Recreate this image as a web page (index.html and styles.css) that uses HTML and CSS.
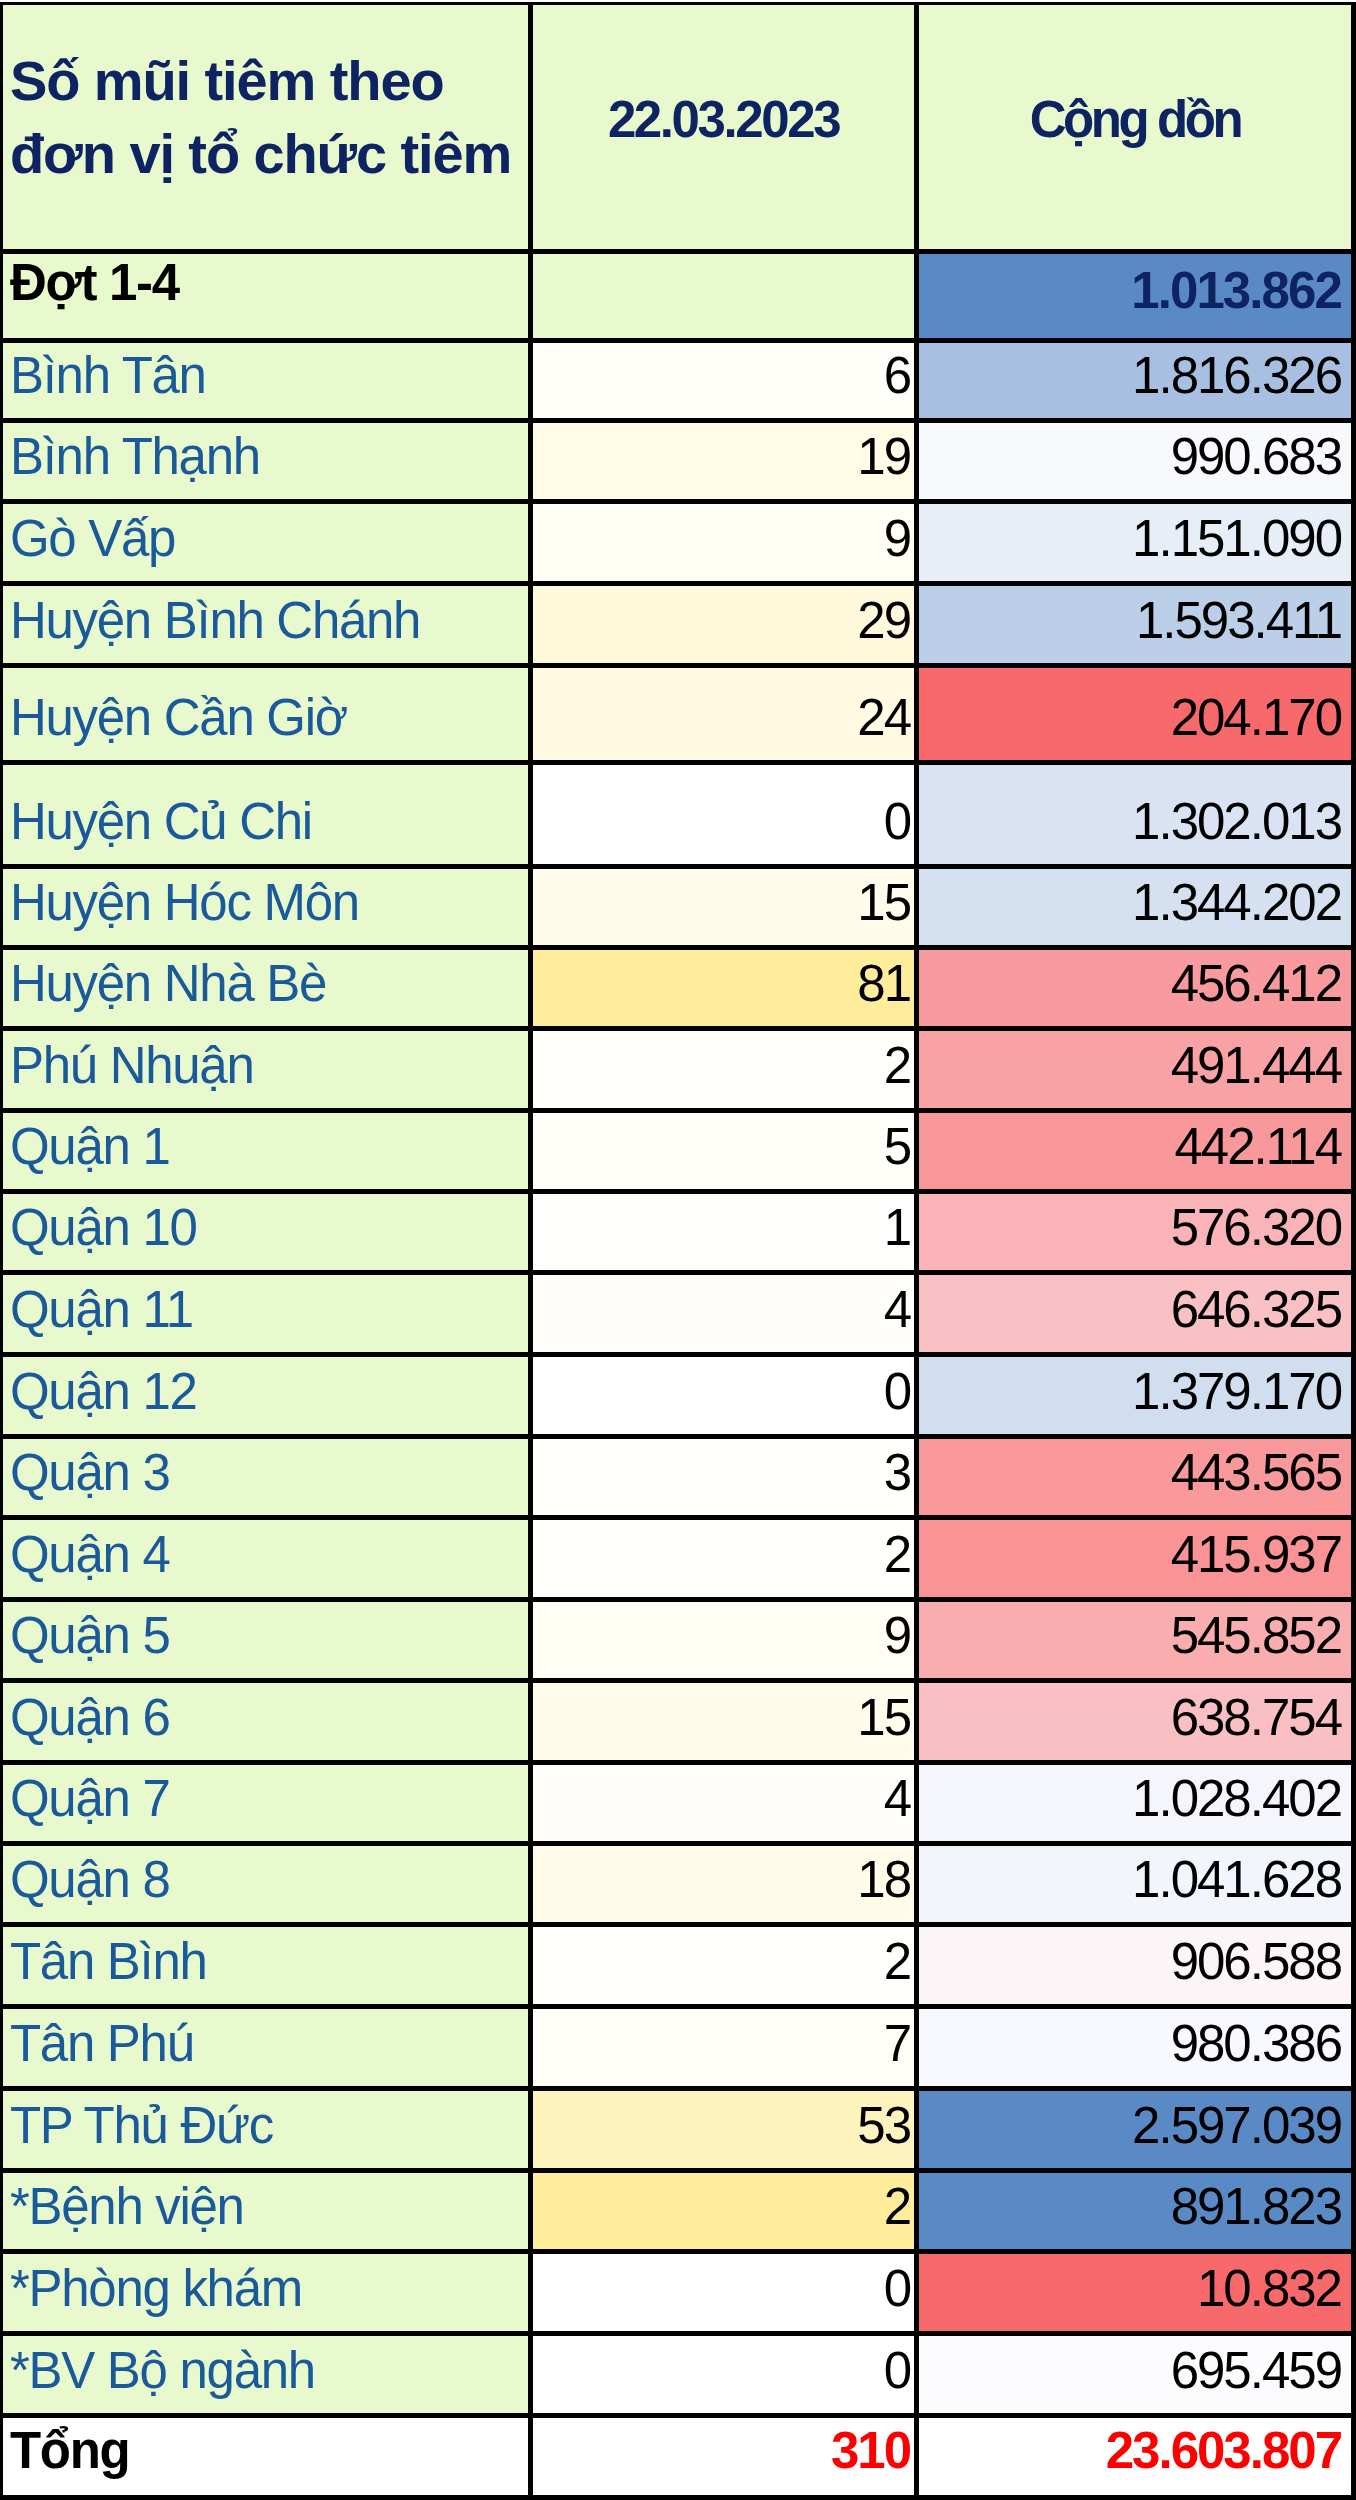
FILE: index.html
```html
<!DOCTYPE html>
<html lang="vi">
<head>
<meta charset="utf-8">
<title>Số mũi tiêm theo đơn vị tổ chức tiêm</title>
<link rel="stylesheet" href="styles.css">
</head>
<body>
<div class="sheet">
  <div class="cell hd hd-title">Số mũi tiêm theo<br>đơn vị tổ chức tiêm</div>
  <div class="cell hd hd-col">22.03.2023</div>
  <div class="cell hd hd-col hd-tight">Cộng dồn</div>

  <div class="cell name grp">Đợt 1-4</div>
  <div class="cell num green"></div>
  <div class="cell cum grp-num" style="background:#5a8ac6">1.013.862</div>

  <div class="cell name">Bình Tân</div><div class="cell num" style="background:#fffef8">6</div><div class="cell cum" style="background:#a7c0e1">1.816.326</div>
  <div class="cell name">Bình Thạnh</div><div class="cell num" style="background:#fffbe7">19</div><div class="cell cum" style="background:#f7f9fd">990.683</div>
  <div class="cell name">Gò Vấp</div><div class="cell num" style="background:#fffdf4">9</div><div class="cell cum" style="background:#e8eef8">1.151.090</div>
  <div class="cell name">Huyện Bình Chánh</div><div class="cell num" style="background:#fff9db">29</div><div class="cell cum" style="background:#bccfe9">1.593.411</div>
  <div class="cell name">Huyện Cần Giờ</div><div class="cell num" style="background:#fffae1">24</div><div class="cell cum" style="background:#f8696b">204.170</div>
  <div class="cell name">Huyện Củ Chi</div><div class="cell num" style="background:#ffffff">0</div><div class="cell cum" style="background:#d9e3f3">1.302.013</div>
  <div class="cell name">Huyện Hóc Môn</div><div class="cell num" style="background:#fffcec">15</div><div class="cell cum" style="background:#d5e0f1">1.344.202</div>
  <div class="cell name">Huyện Nhà Bè</div><div class="cell num" style="background:#ffed9c">81</div><div class="cell cum" style="background:#f99b9e">456.412</div>
  <div class="cell name">Phú Nhuận</div><div class="cell num" style="background:#fffffc">2</div><div class="cell cum" style="background:#f9a2a5">491.444</div>
  <div class="cell name">Quận 1</div><div class="cell num" style="background:#fffef9">5</div><div class="cell cum" style="background:#f9989b">442.114</div>
  <div class="cell name">Quận 10</div><div class="cell num" style="background:#fffffd">1</div><div class="cell cum" style="background:#fab3b6">576.320</div>
  <div class="cell name">Quận 11</div><div class="cell num" style="background:#fffefa">4</div><div class="cell cum" style="background:#fac1c4">646.325</div>
  <div class="cell name">Quận 12</div><div class="cell num" style="background:#ffffff">0</div><div class="cell cum" style="background:#d1def0">1.379.170</div>
  <div class="cell name">Quận 3</div><div class="cell num" style="background:#fffffb">3</div><div class="cell cum" style="background:#f9999b">443.565</div>
  <div class="cell name">Quận 4</div><div class="cell num" style="background:#fffffc">2</div><div class="cell cum" style="background:#f99395">415.937</div>
  <div class="cell name">Quận 5</div><div class="cell num" style="background:#fffdf4">9</div><div class="cell cum" style="background:#faadaf">545.852</div>
  <div class="cell name">Quận 6</div><div class="cell num" style="background:#fffcec">15</div><div class="cell cum" style="background:#fabfc2">638.754</div>
  <div class="cell name">Quận 7</div><div class="cell num" style="background:#fffefa">4</div><div class="cell cum" style="background:#f4f6fc">1.028.402</div>
  <div class="cell name">Quận 8</div><div class="cell num" style="background:#fffbe9">18</div><div class="cell cum" style="background:#f2f5fc">1.041.628</div>
  <div class="cell name">Tân Bình</div><div class="cell num" style="background:#fffffc">2</div><div class="cell cum" style="background:#fcf5f8">906.588</div>
  <div class="cell name">Tân Phú</div><div class="cell num" style="background:#fffdf6">7</div><div class="cell cum" style="background:#f8f9fe">980.386</div>
  <div class="cell name">TP Thủ Đức</div><div class="cell num" style="background:#fff3bd">53</div><div class="cell cum" style="background:#5a8ac6">2.597.039</div>
  <div class="cell name">*Bệnh viện</div><div class="cell num" style="background:#ffed9c">2</div><div class="cell cum" style="background:#5a8ac6">891.823</div>
  <div class="cell name">*Phòng khám</div><div class="cell num" style="background:#ffffff">0</div><div class="cell cum" style="background:#f8696b">10.832</div>
  <div class="cell name">*BV Bộ ngành</div><div class="cell num" style="background:#ffffff">0</div><div class="cell cum" style="background:#fcfcff">695.459</div>

  <div class="cell name total-label">Tổng</div>
  <div class="cell num total-num">310</div>
  <div class="cell cum total-num">23.603.807</div>
</div>
</body>
</html>
```

FILE: styles.css
```css
html, body {
  margin: 0;
  padding: 0;
  background: #ffffff;
}

body {
  font-family: "Liberation Sans", Arial, sans-serif;
}

.sheet {
  margin-top: 2px;
  display: grid;
  grid-template-columns: 525px 381px 432px;
  grid-template-rows: 244px 84px 75px 76px 77px 77px 92px 99px 76px 76px 77px 76px 76px 77px 77px 76px 77px 76px 77px 76px 76px 77px 77px 77px 76px 77px 77px 77px;
  gap: 5px;
  padding: 3px 5px 5px 3px;
  background: #000000;
  width: 1348px;
}

.cell {
  display: flex;
  align-items: flex-end;
  font-size: 51px;
  line-height: 1;
  padding-bottom: 17px;
  box-sizing: border-box;
  white-space: nowrap;
  overflow: hidden;
}

.hd {
  background: #e8f9cd;
  color: #0e2462;
  font-weight: bold;
  padding-bottom: 0;
  align-items: flex-start;
}

.hd-title {
  display: block;
  font-size: 56px;
  line-height: 73px;
  padding: 39px 0 0 7px;
  letter-spacing: -1.1px;
}

.hd-col {
  justify-content: center;
  padding-top: 89px;
  letter-spacing: -2.4px;
}

.hd-tight {
  letter-spacing: -3.4px;
}

.name {
  background: #e8f9cd;
  color: #1a5a9a;
  padding-left: 7px;
  letter-spacing: -1.3px;
}

.num, .cum {
  justify-content: flex-end;
  color: #000000;
  letter-spacing: -2px;
}

.num {
  padding-right: 4px;
}

.cum {
  padding-right: 10px;
}

.green {
  background: #e8f9cd;
}

.grp {
  color: #000000;
  font-weight: bold;
  padding-bottom: 30px;
}

.grp-num {
  color: #0e2462;
  font-weight: bold;
  padding-bottom: 22px;
  letter-spacing: -1.9px;
}

.total-label {
  background: #ffffff;
  color: #000000;
  font-weight: bold;
  padding-bottom: 19px;
}

.total-num {
  background: #ffffff;
  color: #ff0000;
  font-weight: bold;
  padding-bottom: 19px;
  letter-spacing: -2px;
}
```
